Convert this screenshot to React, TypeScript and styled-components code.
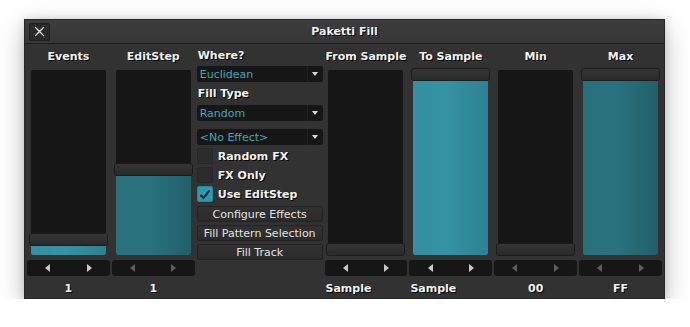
import React from "react";
import styled, { createGlobalStyle } from "styled-components";

const GlobalStyle = createGlobalStyle`
  html, body {
    margin: 0;
    padding: 0;
    background: #ffffff;
  }
  body {
    font-family: "DejaVu Sans", Verdana, sans-serif;
    font-size: 11px;
  }
`;

const Page = styled.div`
  padding: 19px 0 0 24px;
`;

const Window = styled.div`
  width: 641px;
  height: 280px;
  box-sizing: border-box;
  background: #323232;
  border: 1px solid #262626;
  box-shadow: 0 8px 24px rgba(0, 0, 0, 0.26), 0 0 8px rgba(0, 0, 0, 0.12);
  display: flex;
  flex-direction: column;
`;

const TitleBar = styled.div`
  height: 25px;
  background: linear-gradient(#3d3d3d, #363636);
  border-bottom: 1px solid #1e1e1e;
  display: grid;
  grid-template-columns: 1fr auto 1fr;
  align-items: center;
  padding: 0 4px;
`;

const CloseButton = styled.div`
  width: 21px;
  height: 18px;
  box-sizing: border-box;
  background: #2a2a2a;
  border: 1px solid #1f1f1f;
  border-radius: 2px;
  display: flex;
  align-items: center;
  justify-content: center;
`;

const Title = styled.div`
  color: #f2f2f2;
  font-weight: bold;
  text-shadow: 1px 1px 0 #000;
`;

const Body = styled.div`
  display: flex;
  gap: 2px;
  padding: 1px 2px 0 2px;
`;

const Column = styled.div<{ $width?: number }>`
  width: ${(p) => p.$width ?? 83}px;
  display: flex;
  flex-direction: column;
`;

const Header = styled.div`
  height: 23px;
  display: flex;
  align-items: center;
  justify-content: center;
  color: #f2f2f2;
  font-weight: bold;
  text-shadow: 1px 1px 0 #000;
  white-space: nowrap;
`;

const SliderBox = styled.div`
  position: relative;
  width: 79px;
  height: 189px;
  margin: 0 auto;
`;

const Track = styled.div`
  position: absolute;
  top: 2px;
  bottom: 2px;
  left: 2px;
  right: 2px;
  background: #161616;
  border-radius: 2px;
  overflow: hidden;
`;

const Fill = styled.div<{ $dark?: boolean }>`
  position: absolute;
  left: 0;
  right: 0;
  bottom: 0;
  background: ${(p) =>
    p.$dark
      ? "linear-gradient(90deg, #27707c 0%, #29727e 45%, #225f6a 100%)"
      : "linear-gradient(90deg, #3390a0 0%, #3593a3 45%, #2c8192 100%)"};
`;

const Handle = styled.div`
  position: absolute;
  left: 0;
  right: 0;
  height: 13px;
  box-sizing: border-box;
  background: linear-gradient(#353535, #2a2a2a);
  border: 1px solid #1c1c1c;
  border-radius: 3px;
`;

const ArrowBar = styled.div`
  margin-top: 3px;
  height: 16px;
  background: #161616;
  border-radius: 3px;
  display: flex;
  align-items: center;
  justify-content: space-around;
`;

const Arrow = styled.span<{ $dir: "left" | "right"; $dim?: boolean }>`
  width: 0;
  height: 0;
  border-top: 4px solid transparent;
  border-bottom: 4px solid transparent;
  ${(p) =>
    p.$dir === "left"
      ? `border-right: 5px solid ${p.$dim ? "#5e5e5e" : "#c8c8c8"};`
      : `border-left: 5px solid ${p.$dim ? "#5e5e5e" : "#c8c8c8"};`}
`;

const Value = styled.div<{ $left?: boolean }>`
  height: 20px;
  padding-top: 2px;
  display: flex;
  align-items: center;
  justify-content: ${(p) => (p.$left ? "flex-start" : "center")};
  padding-left: ${(p) => (p.$left ? "1px" : "0")};
  color: #f2f2f2;
  font-weight: bold;
  text-shadow: 1px 1px 0 #000;
`;

const Label = styled.div<{ $h: number }>`
  height: ${(p) => p.$h}px;
  display: flex;
  align-items: center;
  padding-left: 1px;
  color: #f2f2f2;
  font-weight: bold;
  text-shadow: 1px 1px 0 #000;
`;

const Dropdown = styled.div<{ $mt?: number }>`
  height: 16px;
  margin-top: ${(p) => p.$mt ?? 0}px;
  background: #161616;
  border-radius: 2px;
  display: flex;
  align-items: center;
  color: #3aa7bf;
`;

const DropText = styled.span`
  flex: 1;
  padding-left: 3px;
`;

const DropArrowBox = styled.span`
  width: 15px;
  height: 16px;
  border-left: 1px solid #202020;
  display: flex;
  align-items: center;
  justify-content: center;
  &::after {
    content: "";
    width: 0;
    height: 0;
    border-left: 3px solid transparent;
    border-right: 3px solid transparent;
    border-top: 4px solid #d8d8d8;
  }
`;

const CheckRow = styled.div`
  height: 16px;
  margin-top: 3px;
  display: flex;
  align-items: center;
  gap: 5px;
  color: #f2f2f2;
  font-weight: bold;
  text-shadow: 1px 1px 0 #000;
`;

const CheckBox = styled.span<{ $on?: boolean }>`
  width: 16px;
  height: 16px;
  box-sizing: border-box;
  border-radius: 2px;
  background: ${(p) => (p.$on ? "#2b9bb4" : "#2c2c2c")};
  border: 1px solid ${(p) => (p.$on ? "#23879d" : "#262626")};
  display: flex;
  align-items: center;
  justify-content: center;
`;

const ButtonStack = styled.div`
  margin-top: 4px;
  display: flex;
  flex-direction: column;
  gap: 3px;
`;

const Button = styled.div`
  height: 16px;
  box-sizing: border-box;
  background: linear-gradient(#313131, #2b2b2b);
  border: 1px solid #232323;
  border-radius: 2px;
  display: flex;
  align-items: center;
  justify-content: center;
  color: #e2e2e2;
  white-space: nowrap;
`;

interface SliderProps {
  label: string;
  value: number; // 0..1
  dark?: boolean;
  dim?: boolean;
  shown: string;
  left?: boolean;
}

const SliderColumn: React.FC<SliderProps> = ({ label, value, dark, dim, shown, left }) => {
  const top = Math.round((1 - value) * 175);
  return (
    <Column>
      <Header>{label}</Header>
      <SliderBox>
        <Track>
          <Fill $dark={dark} style={{ top: Math.max(top + 11, 0) }} />
        </Track>
        <Handle style={{ top }} />
      </SliderBox>
      <ArrowBar>
        <Arrow $dir="left" $dim={dim} />
        <Arrow $dir="right" $dim={dim} />
      </ArrowBar>
      <Value $left={left}>{shown}</Value>
    </Column>
  );
};

const Check = () => (
  <svg width="12" height="11" viewBox="0 0 12 11">
    <path d="M1.5 6 L4.5 9 L10.5 1.5" fill="none" stroke="#101418" strokeWidth="2" />
  </svg>
);

export default function App() {
  return (
    <Page>
      <GlobalStyle />
      <Window>
        <TitleBar>
          <CloseButton>
            <svg width="11" height="11" viewBox="0 0 11 11">
              <path d="M1 1 L10 10 M10 1 L1 10" stroke="#e8e8e8" strokeWidth="1.3" />
            </svg>
          </CloseButton>
          <Title>Paketti Fill</Title>
          <span />
        </TitleBar>
        <Body>
          <SliderColumn label="Events" value={0.057} shown="1" />
          <SliderColumn label="EditStep" value={0.457} dark dim shown="1" />
          <Column $width={126}>
            <Label $h={21}>Where?</Label>
            <Dropdown>
              <DropText>Euclidean</DropText>
              <DropArrowBox />
            </Dropdown>
            <Label $h={23}>Fill Type</Label>
            <Dropdown>
              <DropText>Random</DropText>
              <DropArrowBox />
            </Dropdown>
            <Dropdown $mt={8}>
              <DropText>&lt;No Effect&gt;</DropText>
              <DropArrowBox />
            </Dropdown>
            <CheckRow>
              <CheckBox />
              Random FX
            </CheckRow>
            <CheckRow>
              <CheckBox />
              FX Only
            </CheckRow>
            <CheckRow>
              <CheckBox $on>
                <Check />
              </CheckBox>
              Use EditStep
            </CheckRow>
            <ButtonStack>
              <Button>Configure Effects</Button>
              <Button>Fill Pattern Selection</Button>
              <Button>Fill Track</Button>
            </ButtonStack>
          </Column>
          <SliderColumn label="From Sample" value={0} shown="Sample" left />
          <SliderColumn label="To Sample" value={1} shown="Sample" left />
          <SliderColumn label="Min" value={0} dark dim shown="00" />
          <SliderColumn label="Max" value={1} dark dim shown="FF" />
        </Body>
      </Window>
    </Page>
  );
}
